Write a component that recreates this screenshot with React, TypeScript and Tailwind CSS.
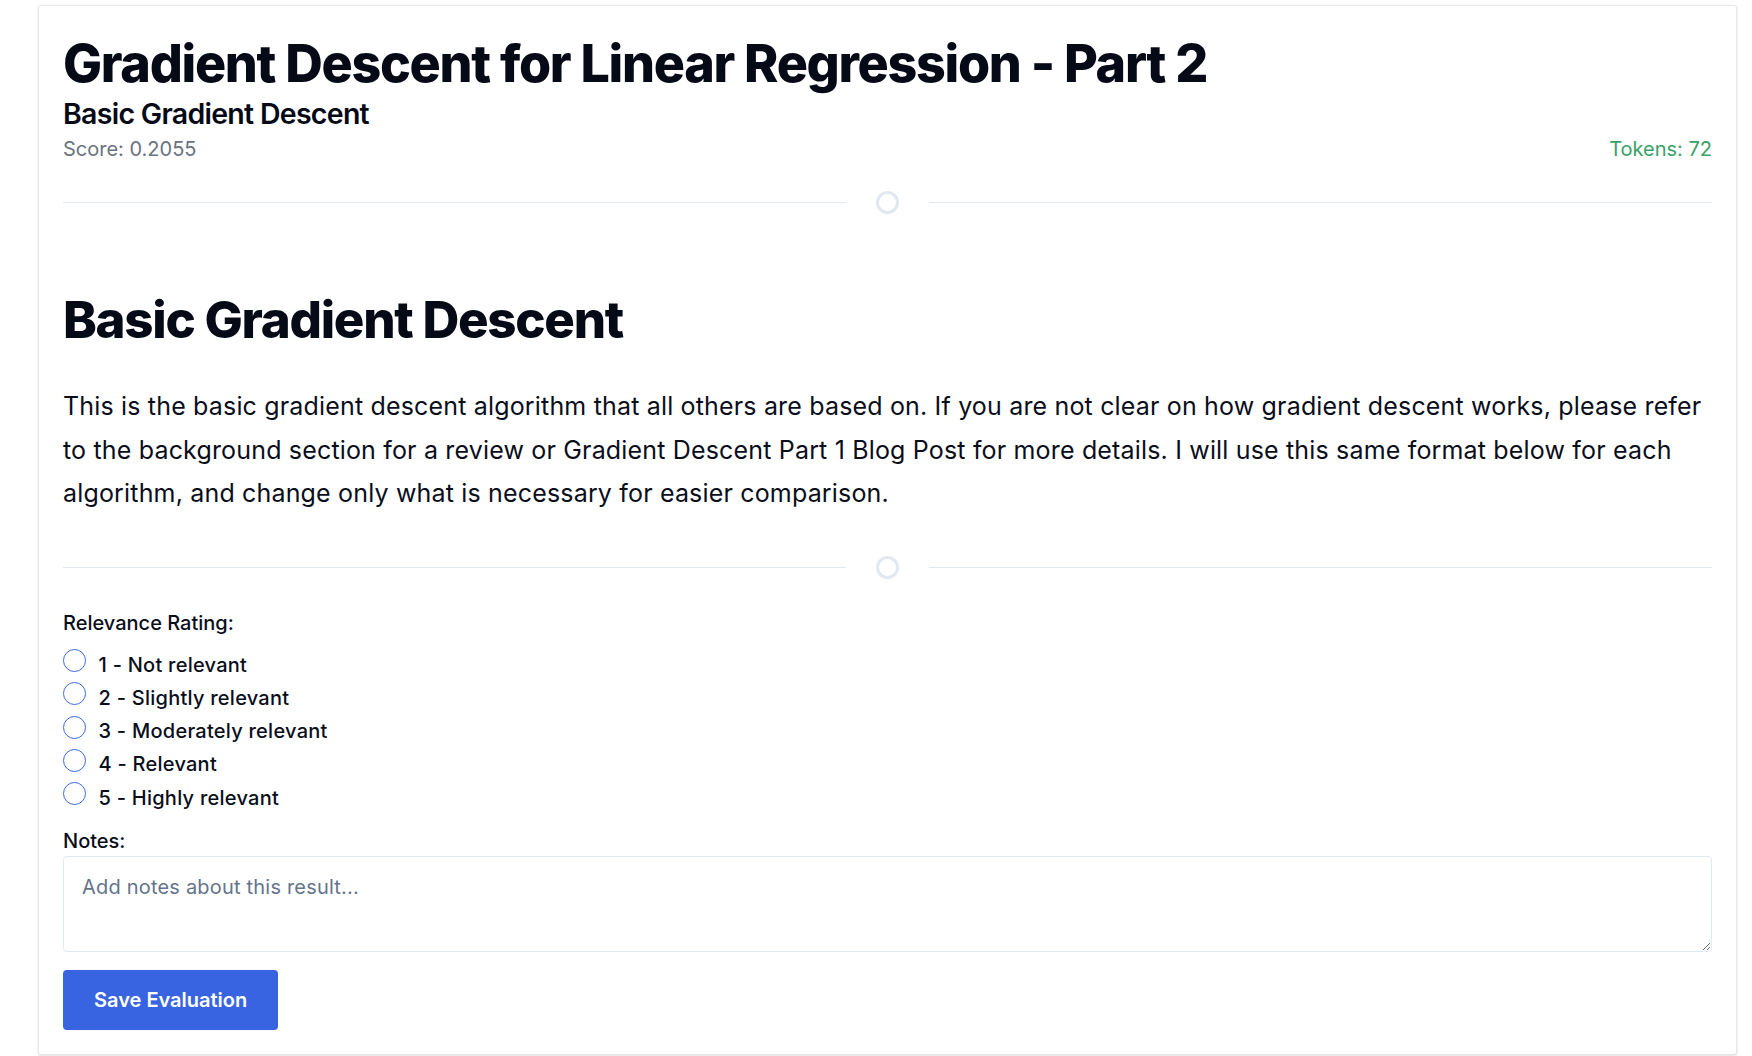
import React from "react";

function Divider() {
  return (
    <div className="flex items-center h-[23px]">
      <div className="flex-1 h-px bg-[#e2e8f0]" />
      <div className="mx-[30px] w-[23px] h-[23px] rounded-full border-[3px] border-[#e2e8f0]" />
      <div className="flex-1 h-px bg-[#e2e8f0]" />
    </div>
  );
}

const options = [
  "1 - Not relevant",
  "2 - Slightly relevant",
  "3 - Moderately relevant",
  "4 - Relevant",
  "5 - Highly relevant",
];

export default function App() {
  return (
    <div className="min-h-screen bg-white font-['Inter',sans-serif] text-[#0a0e1b] pt-[5px] pl-[38px]">
      <div className="w-[1699px] bg-white border border-[#e5e7eb] rounded-[3px] shadow-sm px-6 pt-[32px] pb-6">
        <h1 className="text-[52px] leading-none font-extrabold tracking-tight text-[#060a17]">
          Gradient Descent for Linear Regression - Part 2
        </h1>
        <h2 className="mt-[7px] text-[28.5px] leading-[34px] font-semibold tracking-tight text-[#060a17]">
          Basic Gradient Descent
        </h2>
        <div className="mt-1 flex justify-between text-xl leading-7">
          <span className="text-[#6b7280]">Score: 0.2055</span>
          <span className="text-[#38a169]">Tokens: 72</span>
        </div>

        <div className="mt-[28px]">
          <Divider />
        </div>

        <h2 className="mt-[80px] text-[51px] leading-none font-extrabold tracking-tight text-[#060a17]">
          Basic Gradient Descent
        </h2>
        <p className="mt-10 text-[25px] leading-[43.5px] tracking-[0.17px] text-[#0a0e1b]">
          This is the basic gradient descent algorithm that all others are based on. If you are not clear on how
          gradient descent works, please refer to the background section for a review or Gradient Descent Part 1 Blog
          Post for more details. I will use this same format below for each algorithm, and change only what is
          necessary for easier comparison.
        </p>

        <div className="mt-10">
          <Divider />
        </div>

        <div className="mt-[30px] text-xl leading-7 font-medium">Relevance Rating:</div>
        <div className="mt-3 flex flex-col">
          {options.map((o) => (
            <label key={o} className="flex items-start gap-[12.5px] text-xl leading-[33.3px] font-medium tracking-[0.25px] cursor-pointer">
              <span className="mt-[0.5px] w-[23px] h-[23px] rounded-full border border-[#3b6ae6] bg-white shrink-0" />
              <span>{o}</span>
            </label>
          ))}
        </div>

        <div className="mt-3 text-xl leading-7 font-medium">Notes:</div>
        <textarea
          className="mt-px block w-full h-24 border border-[#e2e8f0] rounded-[4px] bg-white px-[18px] pt-4 text-xl leading-7 tracking-[0.2px] placeholder:text-[#64748b] outline-none"
          placeholder="Add notes about this result..."
        />
        <button className="mt-[18px] h-[60px] px-[31px] rounded-[4px] bg-[#3864e2] text-white text-xl leading-7 font-semibold">
          Save Evaluation
        </button>
      </div>
    </div>
  );
}
